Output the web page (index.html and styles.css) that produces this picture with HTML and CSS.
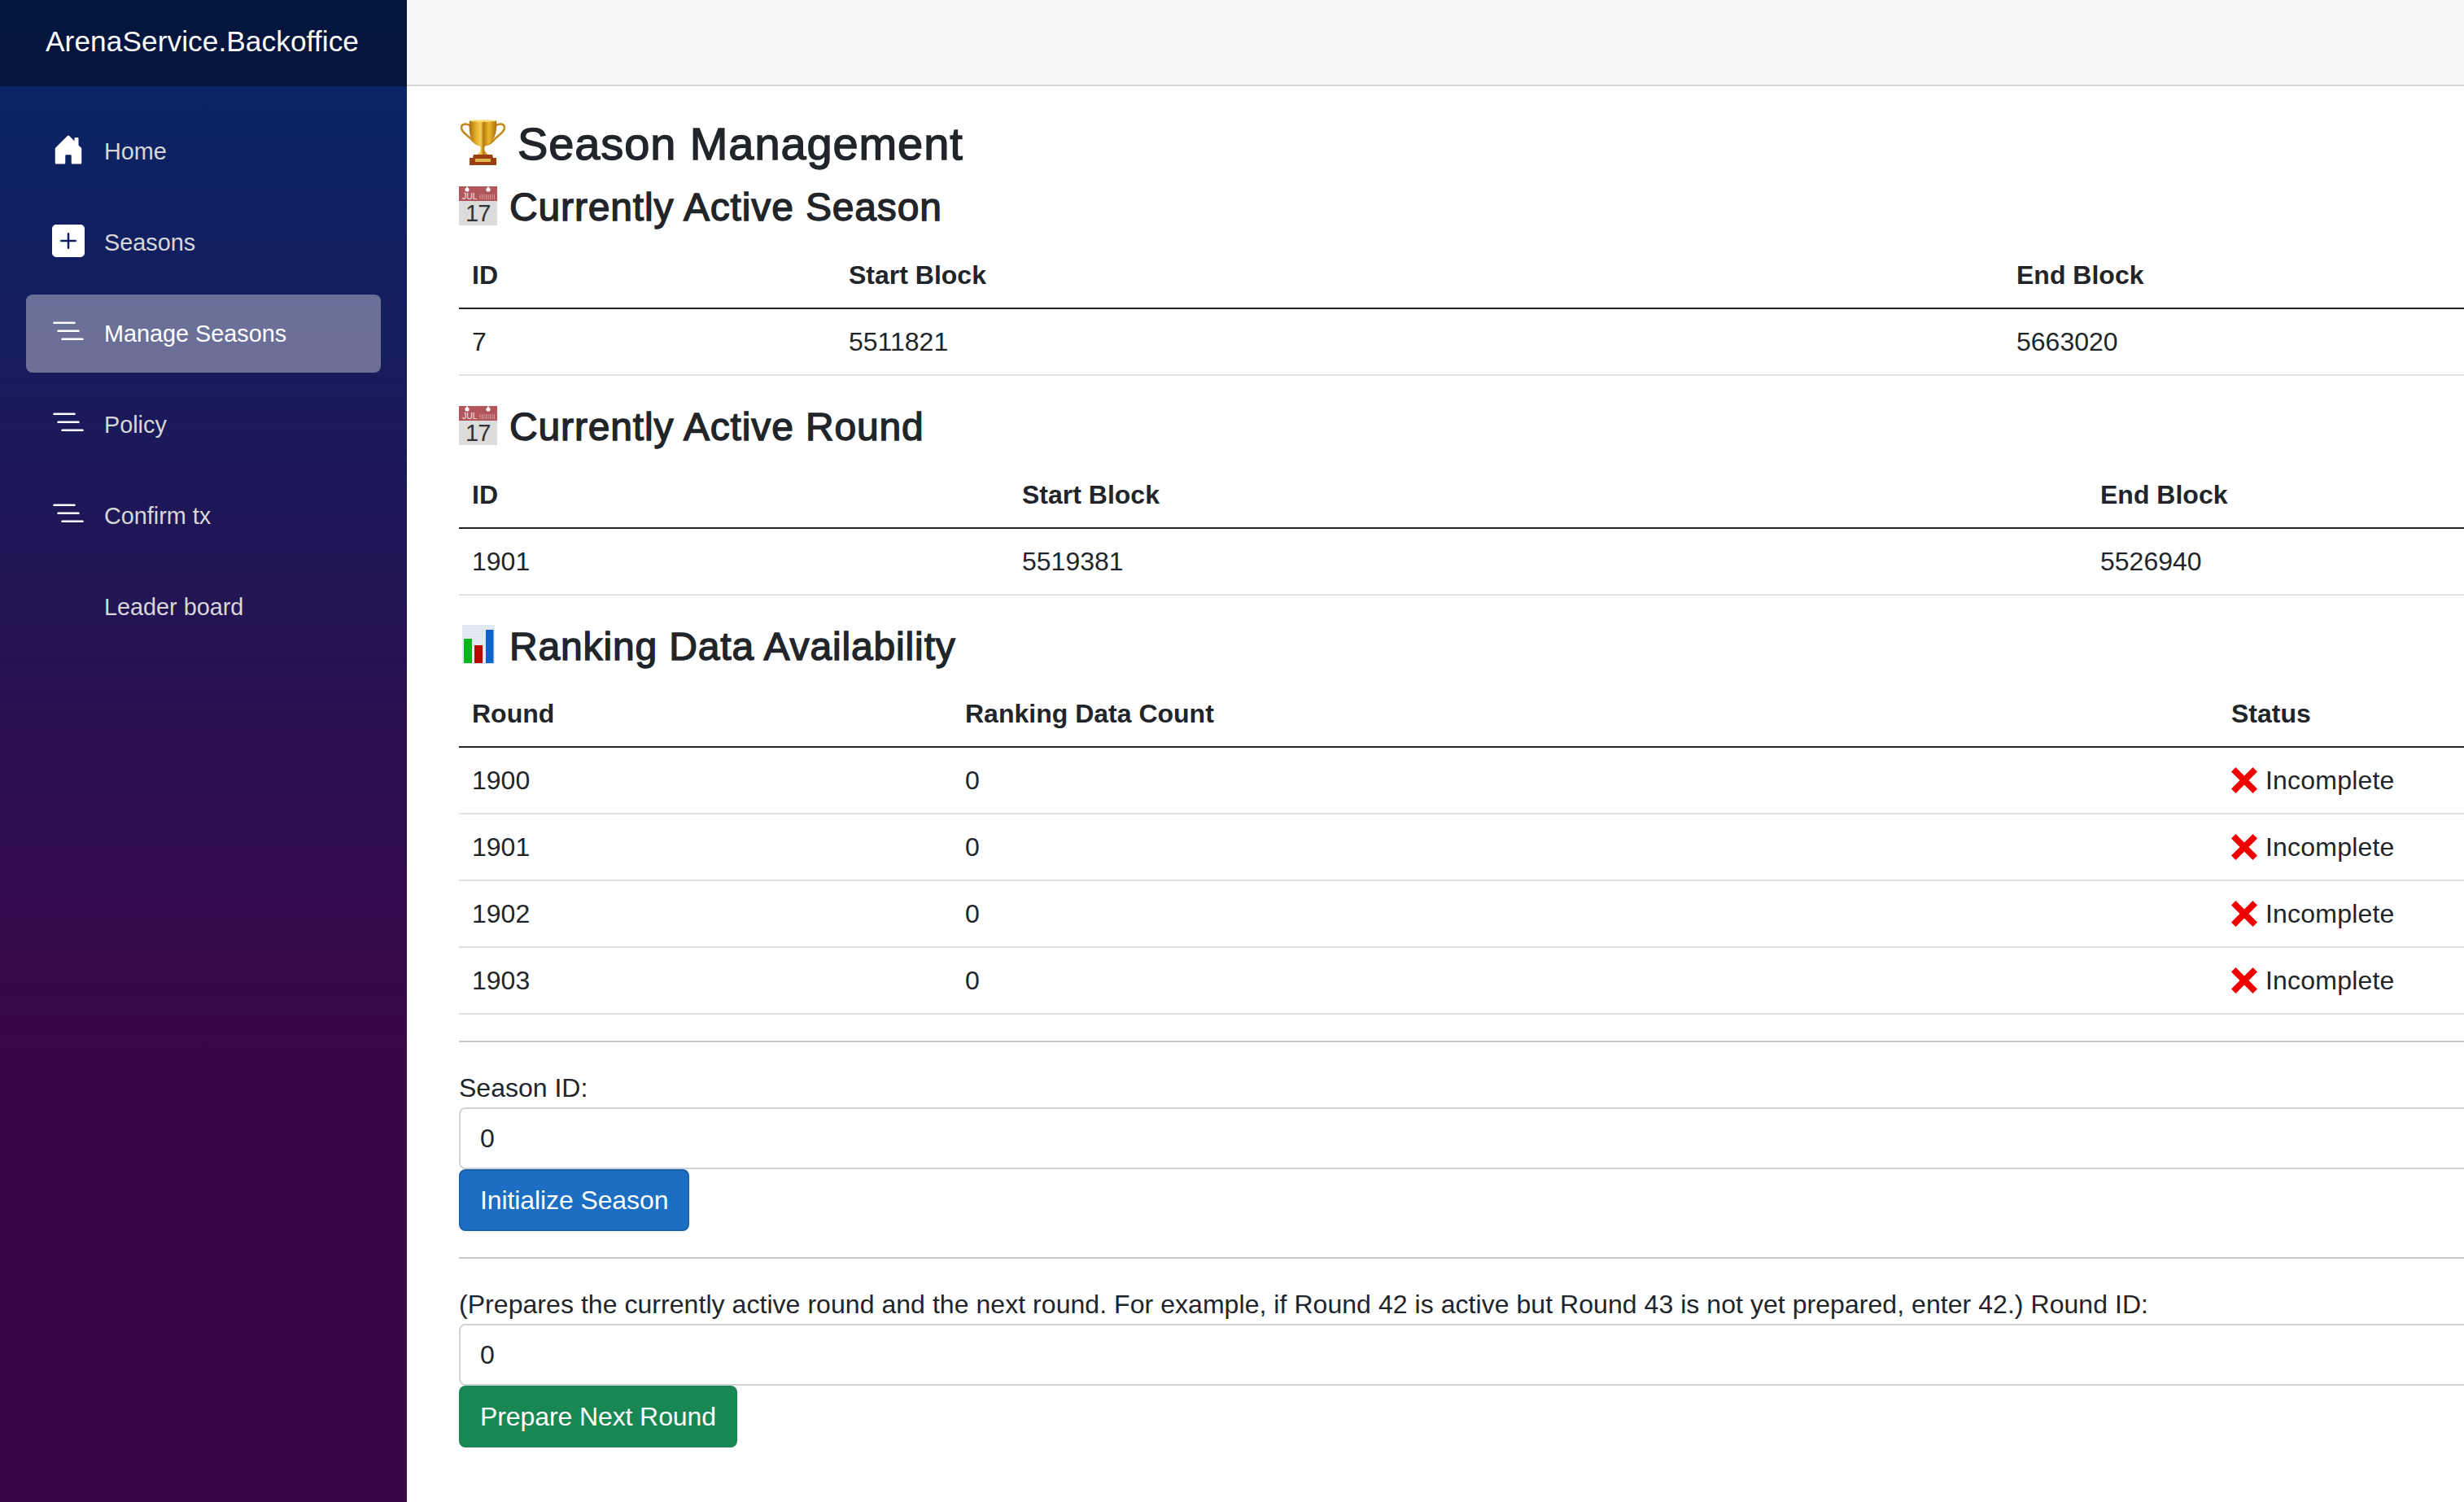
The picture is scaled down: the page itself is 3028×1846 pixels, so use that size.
FILE: index.html
```html
<!DOCTYPE html>
<html lang="en">
<head>
<meta charset="utf-8">
<title>ArenaService.Backoffice</title>
<link rel="stylesheet" href="styles.css">
</head>
<body>
<svg class="defs" width="0" height="0" aria-hidden="true">
  <defs>
    <linearGradient id="gold" x1="0" x2="1" y1="0" y2="0"><stop offset="0" stop-color="#a86c0c"/><stop offset=".22" stop-color="#e0a826"/><stop offset=".42" stop-color="#f6cf55"/><stop offset=".52" stop-color="#b9790f"/><stop offset=".72" stop-color="#eeb62e"/><stop offset="1" stop-color="#a96d0b"/></linearGradient>
    <pattern id="grid" width="3" height="3" patternUnits="userSpaceOnUse"><rect width="3" height="3" fill="#dde7f1"/><path d="M0 0h3M0 0v3" stroke="#f0f5fa" stroke-width=".6"/></pattern>
    <symbol id="calendar" viewBox="0 0 47 48">
      <rect width="47" height="48" fill="#dcdcdc"/>
      <rect width="47" height="18" fill="#b1575c"/>
      <path d="M26 10v6M28.500 10v6M31 10v6M33.500 10v6M36 10v6M38.500 10v6M41 10v6M43.500 10v6" stroke="#d49a9c" stroke-width="1"/>
      <path d="M10 0v3M36 0v3" stroke="#f4dede" stroke-width="1.500"/>
      <circle cx="10" cy="4" r="2.600" fill="#fff"/><circle cx="36" cy="4" r="2.600" fill="#fff"/>
      <text class="cal-month" x="4" y="16">JUL</text>
      <text class="cal-day" x="8" y="43">17</text>
    </symbol>
    <symbol id="cross" viewBox="0 0 32 32"><path d="M5.500 0 16 10.500 26.500 0 32 5.500 21.500 16 32 26.500 26.500 32 16 21.500 5.500 32 0 26.500 10.500 16 0 5.500z"/></symbol>
  </defs>
</svg>
<div class="page">
  <aside class="sidebar">
    <div class="brand-row"><a class="brand">ArenaService.Backoffice</a></div>
    <nav class="nav">
      <a class="nav-link"><svg class="nav-icon" viewBox="0 0 16 16"><path d="M6.5 14.5v-3.505c0-.245.25-.495.5-.495h2c.25 0 .5.25.5.5v3.5a.5.5 0 0 0 .5.5h4a.5.5 0 0 0 .5-.5v-7a.5.5 0 0 0-.146-.354L13 5.793V2.5a.5.5 0 0 0-.5-.5h-1a.5.5 0 0 0-.5.5v1.293L8.354 1.146a.5.5 0 0 0-.708 0l-6 6A.5.5 0 0 0 1.5 7.5v7a.5.5 0 0 0 .5.5h4a.5.5 0 0 0 .5-.5z"/></svg>Home</a>
      <a class="nav-link"><svg class="nav-icon" viewBox="0 0 16 16"><path d="M2 0a2 2 0 0 0-2 2v12a2 2 0 0 0 2 2h12a2 2 0 0 0 2-2V2a2 2 0 0 0-2-2H2zm6.5 4.5v3h3a.5.5 0 0 1 0 1h-3v3a.5.5 0 0 1-1 0v-3h-3a.5.5 0 0 1 0-1h3v-3a.5.5 0 0 1 1 0z"/></svg>Seasons</a>
      <a class="nav-link active"><svg class="nav-icon" viewBox="0 0 16 16"><path fill-rule="evenodd" d="M4.5 11.5A.5.5 0 0 1 5 11h10a.5.5 0 0 1 0 1H5a.5.5 0 0 1-.5-.5zm-2-4A.5.5 0 0 1 3 7h10a.5.5 0 0 1 0 1H3a.5.5 0 0 1-.5-.5zm-2-4A.5.5 0 0 1 1 3h10a.5.5 0 0 1 0 1H1a.5.5 0 0 1-.5-.5z"/></svg>Manage Seasons</a>
      <a class="nav-link"><svg class="nav-icon" viewBox="0 0 16 16"><path fill-rule="evenodd" d="M4.5 11.5A.5.5 0 0 1 5 11h10a.5.5 0 0 1 0 1H5a.5.5 0 0 1-.5-.5zm-2-4A.5.5 0 0 1 3 7h10a.5.5 0 0 1 0 1H3a.5.5 0 0 1-.5-.5zm-2-4A.5.5 0 0 1 1 3h10a.5.5 0 0 1 0 1H1a.5.5 0 0 1-.5-.5z"/></svg>Policy</a>
      <a class="nav-link"><svg class="nav-icon" viewBox="0 0 16 16"><path fill-rule="evenodd" d="M4.5 11.5A.5.5 0 0 1 5 11h10a.5.5 0 0 1 0 1H5a.5.5 0 0 1-.5-.5zm-2-4A.5.5 0 0 1 3 7h10a.5.5 0 0 1 0 1H3a.5.5 0 0 1-.5-.5zm-2-4A.5.5 0 0 1 1 3h10a.5.5 0 0 1 0 1H1a.5.5 0 0 1-.5-.5z"/></svg>Confirm tx</a>
      <a class="nav-link"><span class="nav-icon"></span>Leader board</a>
    </nav>
  </aside>
  <div class="main">
    <div class="top-row"></div>
    <main class="content">
      <h3 class="title"><svg class="emoji trophy" viewBox="7 7 56 56">
        <path d="M21 15c-6-4-12-3-12 2 0 6 9 10 14 16 2 2 4 4 8 5M50 15c6-4 12-3 12 2 0 6-9 10-14 16-2 2-4 4-8 5" fill="none" stroke="#c48a18" stroke-width="2.600"/>
        <path d="M19 8h33c1 11-1 20-5 25-3 4-7 5-9 7-1 2-1 4 0 6 1 2 3 3 4 5H28c1-2 3-3 4-5 1-2 1-4 0-6-2-2-6-3-9-7-4-5-5-14-4-25z" fill="url(#gold)"/>
        <ellipse cx="35.500" cy="8.500" rx="16.500" ry="1.300" fill="#f8dc7c"/>
        <path d="M24 50h23l1 4h4v9H19v-9h4z" fill="#9c3f12"/>
        <path d="M26 55h19v4H26z" fill="#e6b552"/>
      </svg>Season Management</h3>
      <h4 class="subtitle"><svg class="emoji calendar"><use href="#calendar"/></svg>Currently Active Season</h4>
      <table class="table t-season">
        <colgroup><col class="c1"><col class="c2"><col></colgroup>
        <thead><tr><th>ID</th><th>Start Block</th><th>End Block</th></tr></thead>
        <tbody><tr><td>7</td><td>5511821</td><td>5663020</td></tr></tbody>
      </table>
      <h4 class="subtitle"><svg class="emoji calendar"><use href="#calendar"/></svg>Currently Active Round</h4>
      <table class="table t-round">
        <colgroup><col class="c1"><col class="c2"><col></colgroup>
        <thead><tr><th>ID</th><th>Start Block</th><th>End Block</th></tr></thead>
        <tbody><tr><td>1901</td><td>5519381</td><td>5526940</td></tr></tbody>
      </table>
      <h4 class="subtitle"><svg class="emoji chart" viewBox="0 0 47 48"><rect x="4" width="40" height="48" fill="url(#grid)"/><rect x="6" y="17" width="10" height="30" fill="#07b51c"/><rect x="19" y="25" width="10" height="22" fill="#b90a00"/><rect x="33" y="6" width="9.500" height="41" fill="#0e62c9"/></svg>Ranking Data Availability</h4>
      <table class="table t-rank">
        <colgroup><col class="c1"><col class="c2"><col></colgroup>
        <thead><tr><th>Round</th><th>Ranking Data Count</th><th>Status</th></tr></thead>
        <tbody>
          <tr><td>1900</td><td>0</td><td class="status"><svg class="cross"><use href="#cross"/></svg>Incomplete</td></tr>
          <tr><td>1901</td><td>0</td><td class="status"><svg class="cross"><use href="#cross"/></svg>Incomplete</td></tr>
          <tr><td>1902</td><td>0</td><td class="status"><svg class="cross"><use href="#cross"/></svg>Incomplete</td></tr>
          <tr><td>1903</td><td>0</td><td class="status"><svg class="cross"><use href="#cross"/></svg>Incomplete</td></tr>
        </tbody>
      </table>
      <hr class="rule">
      <form class="action">
        <label class="field-label">Season ID:</label>
        <input class="field" type="text" value="0">
        <button class="btn btn-blue" type="button">Initialize Season</button>
      </form>
      <hr class="rule">
      <form class="action">
        <label class="field-label field-label-long">(Prepares the currently active round and the next round. For example, if Round 42 is active but Round 43 is not yet prepared, enter 42.) Round ID:</label>
        <input class="field" type="text" value="0">
        <button class="btn btn-green" type="button">Prepare Next Round</button>
      </form>
    </main>
  </div>
</div>
</body>
</html>
```
FILE: styles.css
```css
* { box-sizing: border-box; }
html, body { margin: 0; height: 100%; overflow: hidden; }
body {
  font-family: "Liberation Sans", Arial, sans-serif;
  font-size: 32px;
  line-height: 48px;
  color: #212529;
  background: #fff;
}
.defs { position: absolute; }
.page { display: flex; height: 1846px; }

.sidebar {
  width: 500px;
  flex: none;
  background: linear-gradient(180deg, #052767 0%, #3a0647 70%);
}
.brand-row {
  height: 106px;
  padding: 0 0 4px 56px;
  display: flex;
  align-items: center;
  background: rgba(0, 0, 0, .4);
}
.brand { font-size: 35.2px; letter-spacing: .1px; color: #fff; }
.nav { padding: 32px 32px 0; display: flex; flex-direction: column; gap: 16px; }
.nav-link {
  height: 96px;
  padding-left: 32px;
  display: flex;
  align-items: center;
  font-size: 28.8px;
  color: #d7d7d7;
  border-radius: 8px;
}
.nav-link.active { background: rgba(255, 255, 255, .37); color: #fff; }
.nav-icon { width: 40px; height: 40px; margin: 0 24px 4px 0; fill: #fff; flex: none; }

.main { flex: 1; min-width: 0; }
.top-row { height: 106px; background: #f7f7f7; border-bottom: 2px solid #d6d5d5; }
.content { padding: 35.2px 0 0 64px; }

.title, .subtitle { margin: 0 0 14px; padding-top: 2px; display: flex; align-items: center; font-weight: 500; -webkit-text-stroke: 1.4px #212529; }
.title { font-size: 56px; line-height: 67.2px; letter-spacing: .9px; }
.subtitle { font-size: 48px; line-height: 57.6px; letter-spacing: .85px; }
.emoji { flex: none; margin-bottom: 4px; }
.trophy { width: 56px; height: 56px; margin-left: 1px; margin-right: 15px; }
.calendar, .chart { width: 47px; height: 48px; margin-right: 15px; }
.cal-month { font-size: 10.5px; fill: #f6e4e4; -webkit-text-stroke: 0; letter-spacing: 0; }
.cal-day { font-size: 29px; fill: #333; -webkit-text-stroke: 0; letter-spacing: -1px; }

.table { width: 100%; table-layout: fixed; border-collapse: collapse; margin-bottom: 32px; }
.table th, .table td { padding: 16px; text-align: left; border-bottom: 2px solid #dee2e6; }
.table th { font-weight: 700; border-bottom-color: #212529; }
.t-season .c1 { width: 463px; }
.t-season .c2 { width: 1435px; }
.t-round .c1 { width: 676px; }
.t-round .c2 { width: 1325px; }
.t-rank .c1 { width: 606px; }
.t-rank .c2 { width: 1556px; }
.status { letter-spacing: .2px; }
.cross { width: 32px; height: 32px; margin-right: 10px; vertical-align: -5px; fill: #f00000; }

.rule { margin: 32px 0; height: 2px; border: 0; background: #c6c7c8; }
.action { display: block; }
.field-label { display: block; }
.field-label-long { letter-spacing: .05px; }
.field {
  display: block;
  width: 100%;
  height: 76px;
  padding: 12px 24px;
  font: inherit;
  color: #212529;
  background: #fff;
  border: 2px solid #ced4da;
  border-right: 0;
  border-radius: 8px 0 0 8px;
  outline: 0;
}
.btn {
  display: block;
  height: 76px;
  padding: 12px 24px;
  font: inherit;
  letter-spacing: -.1px;
  color: #fff;
  border: 2px solid transparent;
  border-radius: 8px;
}
.btn-blue { background: #1b6ec2; border-color: #1861ac; }
.btn-green { background: #198754; }
```
